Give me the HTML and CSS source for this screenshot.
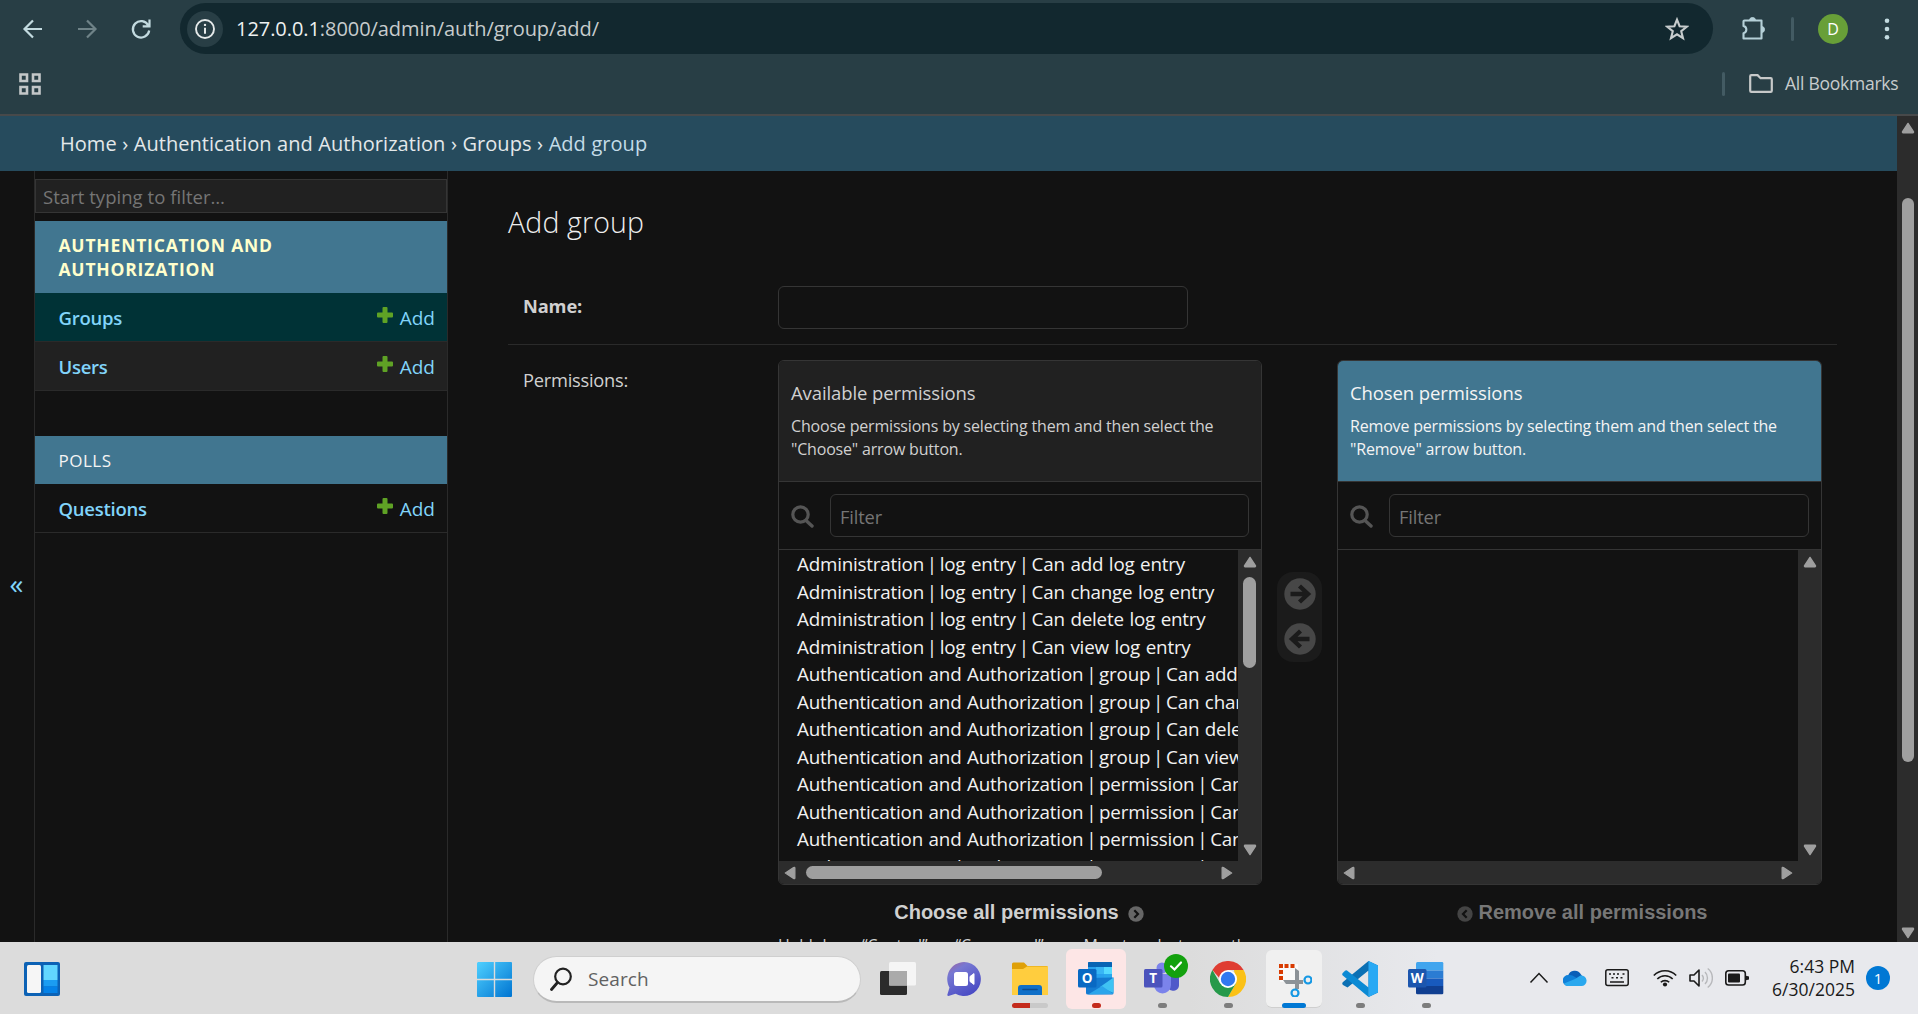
FILE: index.html
```html
<!DOCTYPE html>
<html lang="en">
<head>
<meta charset="utf-8">
<title>Add group | Django site admin</title>
<link rel="stylesheet" href="styles.css">
</head>
<body>
<svg class="defs" aria-hidden="true">
  <symbol id="tri-up" viewBox="0 0 14 12"><path d="M7 1.4 12.4 9.6Q12.8 10.6 12 10.8H2Q1.2 10.6 1.6 9.6Z" fill="#9f9f9f" stroke="#9f9f9f" stroke-width="1.4" stroke-linejoin="round"/></symbol>
  <symbol id="plus" viewBox="0 0 16 16"><path d="M6.500 0h3Q10.500 0 10.500 1V5.500H15Q16 5.500 16 6.500V9.500Q16 10.500 15 10.500H10.500V15Q10.500 16 9.500 16H6.500Q5.500 16 5.500 15V10.500H1Q0 10.500 0 9.500V6.500Q0 5.500 1 5.500H5.500V1Q5.500 0 6.500 0Z" fill="#5fa225"/></symbol>
  <symbol id="mag" viewBox="0 0 23 23"><circle cx="9.500" cy="9.500" r="7.700" fill="none" stroke="#555" stroke-width="3.200"/><path d="M15 15.500 21 21" stroke="#555" stroke-width="3.400" stroke-linecap="round"/></symbol>
</svg>

<header class="chrome">
  <div class="toolbar">
    <svg class="nav" viewBox="0 0 22 22"><path d="M20 11H3M11 2.500 2.500 11l8.500 8.500" fill="none" stroke="#c3dbe0" stroke-width="2.200"/></svg>
    <svg class="nav" viewBox="0 0 22 22"><path d="M2 11h17M11 2.500 19.500 11 11 19.500" fill="none" stroke="#6f8388" stroke-width="2.200"/></svg>
    <svg class="nav" viewBox="0 0 22 22"><path d="M18.300 7.400A8.200 8.200 0 1 0 19.200 12.500M19.500 1.500V8.300H12.700" fill="none" stroke="#c3dbe0" stroke-width="2.200"/></svg>
    <div class="omnibox">
      <span class="info"><svg width="22" height="22" viewBox="0 0 22 22"><circle cx="11" cy="11" r="9" fill="none" stroke="#e6eaea" stroke-width="1.900"/><path d="M11 9.700v6" stroke="#e6eaea" stroke-width="2"/><circle cx="11" cy="6.900" r="1.200" fill="#e6eaea"/></svg></span>
      <span class="url"><b>127.0.0.1</b>:8000/admin/auth/group/add/</span>
      <svg class="star" viewBox="0 0 24 24"><path d="M12 2.600 14.600 9.200 21.700 9.700 16.200 14.200 18 21.200 12 17.300 6 21.200 7.800 14.200 2.300 9.700 9.400 9.200Z" fill="none" stroke="#c7cccd" stroke-width="2.100"/></svg>
    </div>
    <svg class="puzzle" viewBox="0 0 26 26"><path d="M3.500 4.500H20.500V22.500H2.500V17.200A3.700 3.700 0 0 0 2.500 10V5.500Q2.500 4.500 3.500 4.500Z" fill="none" stroke="#b5d0d8" stroke-width="2.100" stroke-linejoin="round"/><path d="M8.500 4.500a3 3 0 0 1 6 0ZM20.500 10.500a3 3 0 0 1 0 6Z" fill="#b5d0d8" stroke="#b5d0d8"/></svg>
    <i class="sep"></i>
    <span class="avatar">D</span>
    <svg class="dots" viewBox="0 0 6 24"><circle cx="3" cy="3.700" r="2.300"/><circle cx="3" cy="12" r="2.300"/><circle cx="3" cy="20.300" r="2.300"/></svg>
  </div>
  <div class="bookmarks">
    <svg class="grid" viewBox="0 0 22 22"><path d="M1.500 1.500h6.500v6.500h-6.500zM14 1.500h6.500v6.500H14zM1.500 14h6.500v6.500h-6.500zM14 14h6.500v6.500H14z" fill="none" stroke="#c3c7c8" stroke-width="2.600"/></svg>
    <i class="sep"></i>
    <svg class="folder" viewBox="0 0 24 20"><path d="M1.200 2.300Q1.200 1.200 2.300 1.200H8.600L11.600 4.200H21.700Q22.800 4.200 22.800 5.300V16.700Q22.800 17.800 21.700 17.800H2.300Q1.200 17.800 1.200 16.700Z" fill="none" stroke="#c7c9c9" stroke-width="2.200"/></svg>
    <span class="allbm">All Bookmarks</span>
  </div>
</header>

<div class="window">
  <div class="site">
    <nav class="crumbs">Home › Authentication and Authorization › Groups › <em>Add group</em></nav>
    <div class="body">
      <div class="toggle"><span>«</span></div>
      <aside class="sidebar">
        <div class="navfilter">Start typing to filter…</div>
        <section class="module">
          <h2 class="current">AUTHENTICATION AND<br>AUTHORIZATION</h2>
          <div class="row active"><b>Groups</b><a><svg><use href="#plus"/></svg><span>Add</span></a></div>
          <div class="row alt"><b>Users</b><a><svg><use href="#plus"/></svg><span>Add</span></a></div>
        </section>
        <section class="module">
          <h2>POLLS</h2>
          <div class="row"><b>Questions</b><a><svg><use href="#plus"/></svg><span>Add</span></a></div>
        </section>
      </aside>
      <main class="content">
        <h1>Add group</h1>
        <div class="field name"><label class="req">Name:</label><div class="input"></div></div>
        <div class="field perms">
          <label>Permissions:</label>
          <div class="col">
            <div class="selector">
              <div class="head"><h3>Available permissions</h3><p>Choose permissions by selecting them and then select the<br>"Choose" arrow button.</p></div>
              <div class="filter"><svg><use href="#mag"/></svg><div class="input">Filter</div></div>
              <div class="select">
                <div class="options">
                  <div>Administration <i>|</i> log entry <i>|</i> Can add log entry</div>
                  <div>Administration <i>|</i> log entry <i>|</i> Can change log entry</div>
                  <div>Administration <i>|</i> log entry <i>|</i> Can delete log entry</div>
                  <div>Administration <i>|</i> log entry <i>|</i> Can view log entry</div>
                  <div>Authentication and Authorization <i>|</i> group <i>|</i> Can add group</div>
                  <div>Authentication and Authorization <i>|</i> group <i>|</i> Can change group</div>
                  <div>Authentication and Authorization <i>|</i> group <i>|</i> Can delete group</div>
                  <div>Authentication and Authorization <i>|</i> group <i>|</i> Can view group</div>
                  <div>Authentication and Authorization <i>|</i> permission <i>|</i> Can add permission</div>
                  <div>Authentication and Authorization <i>|</i> permission <i>|</i> Can change permission</div>
                  <div>Authentication and Authorization <i>|</i> permission <i>|</i> Can delete permission</div>
                  <div>Authentication and Authorization <i>|</i> permission <i>|</i> Can view permission</div>
                </div>
                <div class="vbar"><svg><use href="#tri-up"/></svg><i></i><svg class="down"><use href="#tri-up"/></svg></div>
                <div class="hbar"><svg class="left"><use href="#tri-up"/></svg><i></i><svg class="right"><use href="#tri-up"/></svg></div>
                <div class="corner"></div>
              </div>
            </div>
            <div class="all"><span>Choose all permissions</span><svg viewBox="0 0 16 16"><circle cx="8" cy="8" r="7.700" fill="#666"/><path d="M6.300 4.200 10 8l-3.700 3.800" fill="none" stroke="#121212" stroke-width="2.200"/></svg></div>
            <div class="help"><span>Hold down “Control”, or “Command” on a Mac, to select more than one.</span></div>
          </div>
          <div class="chooser">
            <svg viewBox="0 0 32 32"><circle cx="16" cy="16" r="15.700" fill="#474747"/><path d="M6.500 16H23M15.500 8 24 16l-8.500 8" fill="none" stroke="#1b1b1b" stroke-width="4.400"/></svg>
            <svg viewBox="0 0 32 32"><circle cx="16" cy="16" r="15.700" fill="#474747"/><path d="M25.500 16H9M16.500 8 8 16l8.500 8" fill="none" stroke="#1b1b1b" stroke-width="4.400"/></svg>
          </div>
          <div class="col second">
            <div class="selector chosen">
              <div class="head"><h3>Chosen permissions</h3><p>Remove permissions by selecting them and then select the<br>"Remove" arrow button.</p></div>
              <div class="filter"><svg><use href="#mag"/></svg><div class="input">Filter</div></div>
              <div class="select">
                <div class="options"></div>
                <div class="vbar"><svg><use href="#tri-up"/></svg><svg class="down"><use href="#tri-up"/></svg></div>
                <div class="hbar"><svg class="left"><use href="#tri-up"/></svg><svg class="right"><use href="#tri-up"/></svg></div>
                <div class="corner"></div>
              </div>
            </div>
            <div class="all off"><svg viewBox="0 0 16 16"><circle cx="8" cy="8" r="7.700" fill="#444"/><path d="M9.700 4.200 6 8l3.700 3.800" fill="none" stroke="#121212" stroke-width="2.200"/></svg><span>Remove all permissions</span></div>
          </div>
        </div>
      </main>
    </div>
  </div>
  <div class="pagebar"><svg><use href="#tri-up"/></svg><i></i><svg class="down"><use href="#tri-up"/></svg></div>
</div>

<footer class="taskbar">
  <svg class="widgets" viewBox="0 0 36 34"><rect width="36" height="34" rx="2" fill="#0c62b5"/><rect x="3" y="3" width="14" height="28" rx="1.500" fill="#f6f6f6"/><path d="M19.500 3H33.500V18H19.500Z" fill="#62d7ff"/><path d="M19.500 18H33.500V24.500H19.500Z" fill="#1b9df2"/><path d="M19.500 24.500H33.500V31H19.500Z" fill="#0482e8"/></svg>
  <div class="mid">
    <svg class="start" viewBox="0 0 35 35"><defs><linearGradient id="w" x1="0" y1="0" x2="1" y2="1"><stop stop-color="#4fd0ff"/><stop offset="1" stop-color="#0074d1"/></linearGradient></defs><path d="M1 0H16.800V16.800H0V1ZM18.200 0H34Q35 0 35 1V16.800H18.200ZM0 18.200H16.800V35H1Q0 35 0 34ZM18.200 18.200H35V34Q35 35 34 35H18.200Z" fill="url(#w)"/></svg>
    <div class="search"><svg viewBox="0 0 22 24"><circle cx="13" cy="9.500" r="7.800" fill="none" stroke="#222" stroke-width="2.200"/><path d="M7.500 15.500 1.500 22.500" stroke="#222" stroke-width="2.800" stroke-linecap="round"/></svg><span>Search</span></div>
    <div class="app"><svg viewBox="0 0 36 36"><rect y="10" width="27" height="24" rx="1.500" fill="#2b2b2b"/><rect x="9" y="1" width="27" height="23.500" rx="1.500" fill="#f7f7f7" opacity=".9"/><path d="M9 10H27V24.500H9Z" fill="#aaa"/></svg></div>
    <div class="app"><svg viewBox="0 0 36 36"><defs><linearGradient id="c" x1="0" y1="0" x2=".6" y2="1"><stop stop-color="#a2629b"/><stop offset=".3" stop-color="#7778d2"/><stop offset="1" stop-color="#4a4cc5"/></linearGradient></defs><path d="M18 1A17 17 0 1 1 9.500 32.800L2.500 35Q1 35 1.400 33.400L3.500 26.500A17 17 0 0 1 18 1Z" fill="url(#c)"/><rect x="8" y="11" width="14" height="14" rx="2.500" fill="#fff"/><path d="M24 15.500 28 12.600V23.400L24 20.500Z" fill="#fff" stroke="#fff" stroke-linejoin="round"/></svg></div>
    <div class="app"><svg viewBox="0 0 36 36"><path d="M0 3Q0 1.500 1.500 1.500H12L15.500 5H34.500Q36 5 36 6.500V14H0Z" fill="#dfa008"/><path d="M0 8H11L15 5.500H36V34H0Z" fill="#ffcd3e"/><path d="M6 34V27Q6 24 9 24H27Q30 24 30 27V34Z" fill="#0f6fc8"/><path d="M11 28.500H25" stroke="#0a4b91" stroke-width="1.600" stroke-linecap="round"/></svg><i class="prog"></i></div>
    <div class="app hot"><svg viewBox="0 0 36 36"><path d="M11 1H33Q34 1 34 2V18H10V2Q10 1 11 1Z" fill="#28a1ee"/><path d="M10 2Q10 1 11 1H33Q34 1 34 2V6H10Z" fill="#0864b4"/><path d="M18 6H26V13H18Z" fill="#38b6f5"/><path d="M26 6H34V13H26Z" fill="#54daff"/><path d="M26 13H34V19H26Z" fill="#28a7ec"/><path d="M8 17 35.500 16.500V32Q35.500 33.500 34 33.500H10Q8 33.500 8 32Z" fill="#147bd1"/><path d="M35.500 16.500V32L22 26Z" fill="#3fc3f3"/><path d="M10 33.500 24 25 35.500 33Z" fill="#2ba5eb"/><rect y="8" width="18.500" height="18.500" rx="1.500" fill="#0969c3"/><text x="9.200" y="21.900" class="glyph">O</text></svg><i class="run red"></i></div>
    <div class="app"><svg viewBox="0 0 36 36"><circle cx="18" cy="7" r="5.500" fill="#7b83eb"/><circle cx="30" cy="9" r="4" fill="#5059c9"/><path d="M24 14H35V23A6 6 0 0 1 24 27Z" fill="#5059c9"/><path d="M10 13H27V24A8.500 8.500 0 0 1 10 24Z" fill="#7b83eb"/><rect y="8" width="18.500" height="18.500" rx="1.500" fill="#4b53bc"/><text x="9.200" y="21.900" class="glyph">T</text></svg><i class="run"></i><svg class="check" viewBox="0 0 24 24"><circle cx="12" cy="12" r="12" fill="#13a10e"/><path d="M7 12.300 10.500 15.500 17 8.500" fill="none" stroke="#fff" stroke-width="2.200" stroke-linecap="round"/></svg></div>
    <div class="app"><svg viewBox="0 0 36 36"><path d="M2.400 9A18 18 0 0 1 33.600 9H18V18H10.200Z" fill="#df3d32"/><path d="M33.600 9A18 18 0 0 1 18 36L25.800 22.500 24 9Z" fill="#fbc116"/><path d="M18 36A18 18 0 0 1 2.400 9L10.200 22.500 25.800 22.500Z" fill="#25994a"/><circle cx="18" cy="18" r="9" fill="#fff"/><circle cx="18" cy="18" r="7.200" fill="#3078f0"/></svg><i class="run"></i></div>
    <div class="app snip"><svg viewBox="0 0 36 36"><rect x="4" y="3" width="18" height="18" fill="#f9f9f9"/><path d="M3 3h4v4H3zM8.500 3h4v4h-4zM14.500 3h4v4h-4zM3 9h4v4H3zM3 15h4v4H3z" fill="#d83b01"/><path d="M19 7 23 10V28H19Z" fill="#8c9297"/><path d="M7 19H27V23H10Z" fill="#8c9297"/><circle cx="32" cy="19" r="3.500" fill="#eee" stroke="#1598e4" stroke-width="2.200"/><circle cx="19" cy="32" r="3.500" fill="#eee" stroke="#1598e4" stroke-width="2.200"/></svg><i class="run blue"></i></div>
    <div class="app"><svg viewBox="0 0 36 36"><path d="M26.500 0 36 4.500V31.500L26.500 36V9.500L5.500 26.500 1 24Q-.5 22.500 1 21Z" fill="#0b70b4"/><path d="M26.500 0 36 4.500V31.500L26.500 36Z" fill="#29a9f4"/><path d="M5 9.500 26.500 26.500V36L.8 14.500Q-.5 13 1 11.700L3 9.800Q4 9 5 9.500Z" fill="#0b8ad4"/></svg><i class="run"></i></div>
    <div class="app"><svg viewBox="0 0 36 36"><path d="M9.500 1H34Q35.300 1 35.300 2.300V9.500H8V2.500Q8 1 9.500 1Z" fill="#41a5ee"/><path d="M8 9.500H35.300V17.500H8Z" fill="#2b7cd3"/><path d="M8 17.500H35.300V25H8Z" fill="#185abd"/><path d="M8 25H35.300V32Q35.300 33.300 34 33.300H9.500Q8 33.300 8 32Z" fill="#103f91"/><rect y="8" width="18.500" height="18.500" rx="1.500" fill="#1c56ae"/><text x="9.200" y="21.900" class="glyph">W</text></svg><i class="run"></i></div>
  </div>
  <div class="tray">
    <svg viewBox="0 0 24 24"><path d="M3.500 16.500 12 7.500l8.500 9" fill="none" stroke="#1a1a1a" stroke-width="1.500"/></svg>
    <svg class="cloud" viewBox="0 0 24 24"><path d="M5 10A7 7 0 0 1 18 8.500L22 14H4Z" fill="#0a5fb8"/><path d="M5.500 9Q9 8.500 12 11L18 15 6 20H5A5.500 5.500 0 0 1 5.500 9Z" fill="#1080d8"/><path d="M17.500 9.500A5.200 5.200 0 0 1 19 20H5Q2 20 1 17.500L12 13Z" fill="#2aa8ee"/></svg>
    <svg class="kbd" viewBox="0 0 24 24"><rect x=".8" y="3.800" width="22.400" height="15.600" rx="2" fill="none" stroke="#1a1a1a" stroke-width="1.500"/><path d="M4 8h2M8 8h2M12 8h2M17.500 8h2M6.500 11.800h2M11 11.800h2M15.500 11.800h2M5 16h14" stroke="#1a1a1a" stroke-width="1.600"/></svg>
    <svg class="wifi" viewBox="0 0 24 24"><path d="M.8 9.500a15.500 15.500 0 0 1 22.400 0M4.300 13a10.700 10.700 0 0 1 15.400 0M7.800 16.300a6 6 0 0 1 8.400 0" fill="none" stroke="#1a1a1a" stroke-width="1.600"/><circle cx="12" cy="18.500" r="2.100" fill="#1a1a1a"/></svg>
    <svg class="vol" viewBox="0 0 24 24"><path d="M1 9H5L10 4V20L5 15H1Z" fill="none" stroke="#1a1a1a" stroke-width="1.600" stroke-linejoin="round"/><path d="M13 9a5 5 0 0 1 0 6.500M16 6a8.500 8.500 0 0 1 0 12M18.700 2.500a12 12 0 0 1 0 19" fill="none" stroke="#b7b8bb" stroke-width="1.400"/></svg>
    <svg class="batt" viewBox="0 0 24 24"><rect x=".8" y="4.800" width="19.500" height="14.200" rx="2.800" fill="none" stroke="#1a1a1a" stroke-width="1.600"/><rect x="3" y="7.500" width="12" height="9" rx="1" fill="#1a1a1a"/><path d="M21 9.800 24 10.500V13.500L21 14.200Z" fill="#1a1a1a"/></svg>
    <div class="clock">6:43 PM<br>6/30/2025</div>
    <span class="badge">1</span>
  </div>
</footer>
</body>
</html>
```
FILE: styles.css
```css
* { box-sizing: border-box; }
body {
  margin: 0; width: 1918px; height: 1014px; overflow: hidden;
  display: flex; flex-direction: column;
  background: #121212; color: #d0d0d0;
  font-family: "Open Sans", "Noto Sans", sans-serif; font-size: 19px;
}
svg { display: block; flex: none; }
.defs { width: 0; height: 0; position: absolute; }
h1, h2, h3, p { margin: 0; font-weight: 400; }
span, b { white-space: nowrap; }

/* browser chrome */
.chrome { height: 116px; background: #283e45; border-bottom: 2px solid #47494a; flex: none; }
.toolbar { height: 57px; display: flex; align-items: center; padding-left: 22px; }
.nav { width: 22px; height: 22px; margin-right: 32px; }
.omnibox { width: 1533px; height: 51px; margin-left: -4px; border-radius: 26px; background: #12282f; display: flex; align-items: center; padding: 0 24px 0 7px; }
.info { width: 36px; height: 36px; border-radius: 50%; background: #283e45; display: grid; place-items: center; }
.url { margin-left: 13px; flex: none; color: #c7cccd; font-size: 20px; letter-spacing: -0.06px; }
.url b { font-weight: 400; color: #eef1f1; }
.star { width: 24px; height: 24px; margin-left: auto; }
.puzzle { width: 26px; height: 26px; margin-left: 28px; }
.sep { width: 3px; height: 24px; border-radius: 2px; background: #435b63; }
.toolbar .sep { margin-left: 24px; }
.avatar { width: 30px; height: 30px; border-radius: 50%; background: #689f38; color: #fff; font-size: 16px; display: grid; place-items: center; margin-left: 24px; }
.dots { width: 6px; height: 24px; fill: #c3dbe0; margin-left: 36px; }
.bookmarks { height: 54px; display: flex; align-items: center; padding: 0 19px; }
.grid { width: 22px; height: 22px; }
.bookmarks .sep { margin-left: auto; }
.folder { width: 24px; height: 20px; margin: 0 12px 0 24px; }
.allbm { color: #c7cccd; font-size: 17.5px; width: 114px; letter-spacing: -0.25px; margin-top: -2px; }

/* page */
.window { display: flex; height: 826px; flex: none; overflow: hidden; }
.site { width: 1897px; }
.crumbs { height: 55px; line-height: 56px; padding-left: 60px; background: #264b5d; color: #e3e8ea; font-size: 20px; letter-spacing: 0.04px; word-spacing: 0.3px; }
.crumbs em { font-style: normal; color: #c4dce8; }
.body { display: flex; height: 771px; overflow: hidden; }
.toggle { width: 34px; color: #81d4fa; display: flex; align-items: center; padding: 53px 0 0 9.5px; font-size: 28px; }
.sidebar { width: 414px; border: solid #2a2a2a; border-width: 0 1px; padding-top: 8px; }
.navfilter { height: 34px; border: 1px solid #353535; background: #212121; color: #757575; line-height: 34px; padding-left: 7px; font-size: 18.5px; letter-spacing: 0.04px; }
.module { margin-top: 8px; }
.module + .module { margin-top: 45px; }
.module h2 { background: #417690; color: #f4f4f4; padding: 13px 23.5px 11px; font-size: 17px; line-height: 24px; letter-spacing: 0.5px; }
.module .current { color: #ffc; font-weight: 700; font-size: 17.5px; letter-spacing: 0.8px; padding: 12px 23.5px; }
.row { height: 49px; border-bottom: 1px solid #2a2a2a; display: flex; justify-content: space-between; align-items: center; padding: 0 12px 0 23.5px; color: #81d4fa; }
.row b { font-weight: 600; font-size: 18.5px; letter-spacing: -0.26px; }
.row a { display: flex; gap: 7px; align-items: center; }
.row a span { margin-top: 1px; }
.row a svg { width: 16px; height: 16px; margin-top: -4px; }
.active { background: #003236; }
.alt { background: #212121; }
.content { width: 1389px; padding: 33px 0 0 60px; }
h1 { font-size: 28.5px; font-weight: 300; line-height: 36px; height: 38px; color: #eee; letter-spacing: 0.15px; }
.field { display: flex; width: 1329px; }
.field label { width: 270px; padding-left: 15px; font-size: 18.3px; letter-spacing: -0.25px; }
.input { border: 1px solid #353535; border-radius: 6px; height: 43px; }
.name { margin-top: 43px; height: 60px; border-bottom: 1px solid #2a2a2a; }
.name .input { width: 410px; margin-top: 1px; }
.field .req { font-weight: 700; line-height: 42px; letter-spacing: -0.15px; }
.perms { padding-top: 15px; }
.perms label { line-height: 39px; }
.col { width: 484px; }
.second { width: 485px; }
.selector { height: 525px; border: 1px solid #353535; border-radius: 6px; overflow: hidden; }
.head { height: 121px; background: #212121; border-bottom: 1px solid #353535; padding: 17px 12px; }
.chosen .head { background: #417690; color: #f4f4f4; }
.head h3 { font-size: 18.5px; line-height: 30px; letter-spacing: -0.1px; }
.head p { font-size: 16px; line-height: 23px; margin-top: 7px; letter-spacing: -0.18px; white-space: nowrap; }
.filter { height: 68px; border-bottom: 1px solid #353535; display: flex; align-items: center; padding: 0 12px; gap: 16px; }
.filter svg { width: 23px; height: 23px; margin-top: 1px; }
.filter .input { flex: 1; line-height: 43px; padding-left: 9px; color: #757575; font-size: 18.3px; letter-spacing: -0.15px; }
.select { display: grid; grid-template: 311px 23px / 1fr 23px; }
.options { overflow: hidden; white-space: nowrap; line-height: 27.5px; padding: 1px 0 0 18px; color: #f2f2f2; font-size: 18.8px; letter-spacing: -0.2px; word-spacing: 0.95px; min-width: 0; }
.options i { font-style: normal; margin: 0 -0.15em; }
.vbar, .hbar, .corner, .pagebar { background: #2c2c2c; }
.vbar, .pagebar { display: flex; flex-direction: column; align-items: center; padding: 6px 0 5px; }
.vbar svg, .hbar svg, .pagebar svg { width: 14px; height: 12px; }
.vbar i { width: 13px; height: 91px; margin-top: 9px; border-radius: 7px; background: #9f9f9f; }
.down { transform: rotate(180deg); margin-top: auto; }
.hbar { display: flex; align-items: center; padding: 0 4px; }
.hbar i { width: 296px; height: 13px; margin-left: 9px; border-radius: 7px; background: #9f9f9f; }
.left { transform: rotate(-90deg); }
.right { transform: rotate(90deg); margin-left: auto; }
.pagebar { width: 21px; padding: 6px 0 3px; }
.pagebar i { width: 12px; height: 564px; margin-top: 64px; border-radius: 6px; background: #9f9f9f; }
.all { height: 54px; display: flex; align-items: center; justify-content: center; gap: 9px; padding-right: 2px; font: bold 20px "Liberation Sans", Arial, sans-serif; color: #d0d0d0; }
.all svg { width: 16px; height: 16px; margin-top: 3px; }
.off { color: #777; gap: 6px; padding: 0 0 0 5px; }
.help { font-size: 16px; line-height: 23px; margin-top: -5px; letter-spacing: -0.12px; }
.chooser { width: 45px; height: 90px; margin: 212px 15px 0 15px; border-radius: 16px; background: #1b1b1b; display: flex; flex-direction: column; align-items: center; justify-content: space-between; padding: 6px 0 7px; }
.chooser svg { width: 32px; height: 32px; }

/* taskbar */
.taskbar { height: 72px; flex: none; display: flex; align-items: center; background: linear-gradient(90deg, #dcdcdc 0 62%, #e8e9ed 75%); color: #1a1a1a; }
.widgets { width: 36px; height: 34px; margin: 2px 417px 0 24px; }
.mid { display: flex; align-items: center; height: 72px; flex: none; }
.start { width: 35px; height: 35px; margin: 3px 21px 0 0; }
.search { width: 328px; height: 47px; margin: 2px 7px 0 0; border-radius: 24px; border: 1px solid #cfcfcf; border-bottom: 2px solid #b9b9b9; background: #f5f5f5; display: flex; align-items: center; padding-left: 16px; color: #616161; flex: none; letter-spacing: 0.1px; }
.search svg { width: 22px; height: 24px; margin-right: 16px; }
.app { width: 60px; height: 60px; margin: 2px 0 0; position: relative; display: grid; place-items: center; border-radius: 6px; flex: none; }
.app + .app { margin-left: 6px; }
.app > svg { width: 36px; height: 36px; }
.hot { background: #fde6e6; }
.snip::before { content: ""; position: absolute; inset: 1px 2px 1px; border-radius: 6px; background: #f0f0f0; border-bottom: 1px solid #cfcfcf; }
.snip > svg { position: relative; }
.run, .prog { position: absolute; bottom: 1px; left: 26px; width: 9px; height: 5px; border-radius: 3px; background: #7d7d7d; }
.prog { left: 12px; width: 36px; background: linear-gradient(90deg, #c42b1c 50%, #c9c9c9 50%); }
.red { background: #c42b1c; }
.blue { left: 18px; width: 24px; background: #0078d4; }
.app > .check { position: absolute; left: 32px; top: 5px; width: 24px; height: 24px; }
.glyph { font: bold 13.5px "Open Sans", sans-serif; fill: #fff; text-anchor: middle; }
.tray { display: flex; align-items: center; margin-left: auto; padding-right: 28px; }
.tray svg { width: 24px; height: 24px; }
.cloud { margin-left: 12px; }
.kbd { margin-left: 18px; }
.wifi { margin-left: 24px; }
.vol, .batt { margin-left: 12px; }
.clock { width: 106px; text-align: right; font-size: 17.5px; line-height: 23px; margin-right: 11px; }
.badge { width: 24px; height: 24px; border-radius: 50%; background: #0078d4; color: #fff; font-size: 15px; display: grid; place-items: center; }
```
